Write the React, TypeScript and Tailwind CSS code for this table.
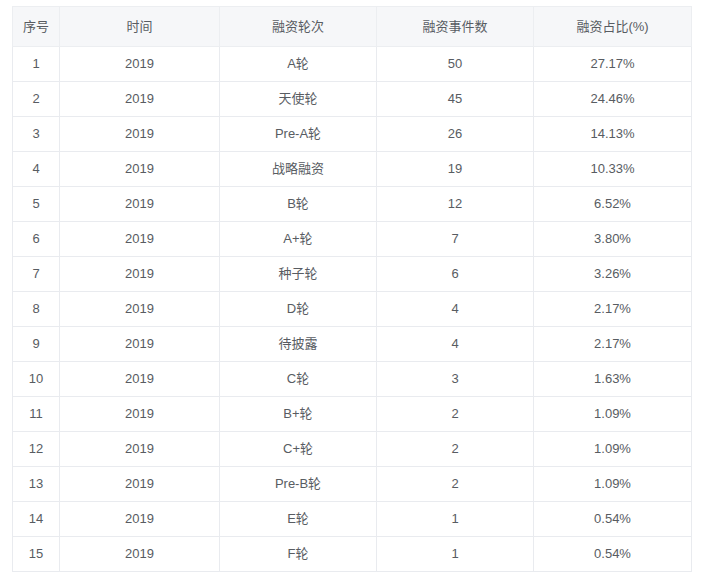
import React from 'react';

const ROWS: [string, string, string][] = [
  ['A轮', '50', '27.17%'],
  ['天使轮', '45', '24.46%'],
  ['Pre-A轮', '26', '14.13%'],
  ['战略融资', '19', '10.33%'],
  ['B轮', '12', '6.52%'],
  ['A+轮', '7', '3.80%'],
  ['种子轮', '6', '3.26%'],
  ['D轮', '4', '2.17%'],
  ['待披露', '4', '2.17%'],
  ['C轮', '3', '1.63%'],
  ['B+轮', '2', '1.09%'],
  ['C+轮', '2', '1.09%'],
  ['Pre-B轮', '2', '1.09%'],
  ['E轮', '1', '0.54%'],
  ['F轮', '1', '0.54%'],
];

const HEADERS = ['序号', '时间', '融资轮次', '融资事件数', '融资占比(%)'];

export default function App() {
  return (
    <div
      className="w-[709px] h-[581px] bg-white pt-[6px] pl-[12px]"
      style={{ fontFamily: '"Liberation Sans", "Noto Sans CJK SC", sans-serif' }}
    >
      <table className="border-collapse text-[13px] text-[#585c62] table-fixed w-[679px]">
        <colgroup>
          <col className="w-[47px]" />
          <col className="w-[160px]" />
          <col className="w-[157px]" />
          <col className="w-[157px]" />
          <col className="w-[158px]" />
        </colgroup>
        <thead>
          <tr className="h-[40px] bg-[#f6f7f9]">
            {HEADERS.map((h) => (
              <th key={h} className="border border-[#eceef1] font-normal text-center">
                {h}
              </th>
            ))}
          </tr>
        </thead>
        <tbody>
          {ROWS.map(([round, count, pct], i) => (
            <tr key={i} className="h-[35px]">
              <td className="border border-[#e9ebef] text-center">{i + 1}</td>
              <td className="border border-[#e9ebef] text-center">2019</td>
              <td className="border border-[#e9ebef] text-center">{round}</td>
              <td className="border border-[#e9ebef] text-center">{count}</td>
              <td className="border border-[#e9ebef] text-center">{pct}</td>
            </tr>
          ))}
        </tbody>
      </table>
    </div>
  );
}
